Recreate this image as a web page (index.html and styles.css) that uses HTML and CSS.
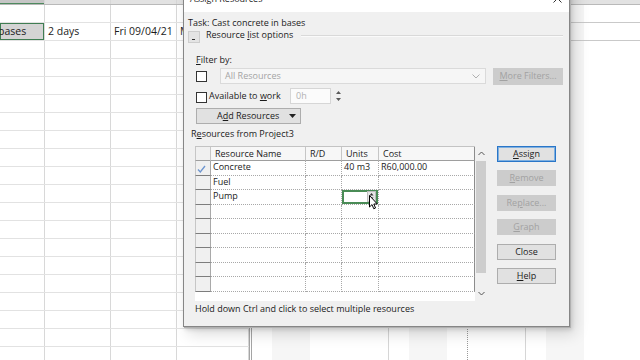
FILE: index.html
```html
<!DOCTYPE html>
<html lang="en">
<head>
  <meta charset="UTF-8">
  <title>Assign Resources</title>
  <link rel="stylesheet" href="styles.css">
</head>
<body>
<div class="screen">

  <!-- project sheet behind the dialog -->
  <div class="sheet">
    <div class="table">
      <div class="trow thead"><div class="tcell w1"></div><div class="tcell w2"></div><div class="tcell w3"></div><div class="tcell w4"></div></div>
      <div class="trow"><div class="tcell w1"></div><div class="tcell w2"></div><div class="tcell w3"></div><div class="tcell w4"></div></div>
      <div class="trow"><div class="tcell w1 picked"><span class="cut">bases</span></div><div class="tcell w2">2 days</div><div class="tcell w3">Fri 09/04/21</div><div class="tcell w4">Mon 12/04/21</div></div>
      <div class="trow"><div class="tcell w1"></div><div class="tcell w2"></div><div class="tcell w3"></div><div class="tcell w4"></div></div>
      <div class="trow"><div class="tcell w1"></div><div class="tcell w2"></div><div class="tcell w3"></div><div class="tcell w4"></div></div>
      <div class="trow"><div class="tcell w1"></div><div class="tcell w2"></div><div class="tcell w3"></div><div class="tcell w4"></div></div>
      <div class="trow"><div class="tcell w1"></div><div class="tcell w2"></div><div class="tcell w3"></div><div class="tcell w4"></div></div>
      <div class="trow"><div class="tcell w1"></div><div class="tcell w2"></div><div class="tcell w3"></div><div class="tcell w4"></div></div>
      <div class="trow"><div class="tcell w1"></div><div class="tcell w2"></div><div class="tcell w3"></div><div class="tcell w4"></div></div>
      <div class="trow"><div class="tcell w1"></div><div class="tcell w2"></div><div class="tcell w3"></div><div class="tcell w4"></div></div>
      <div class="trow"><div class="tcell w1"></div><div class="tcell w2"></div><div class="tcell w3"></div><div class="tcell w4"></div></div>
      <div class="trow"><div class="tcell w1"></div><div class="tcell w2"></div><div class="tcell w3"></div><div class="tcell w4"></div></div>
      <div class="trow"><div class="tcell w1"></div><div class="tcell w2"></div><div class="tcell w3"></div><div class="tcell w4"></div></div>
      <div class="trow"><div class="tcell w1"></div><div class="tcell w2"></div><div class="tcell w3"></div><div class="tcell w4"></div></div>
      <div class="trow"><div class="tcell w1"></div><div class="tcell w2"></div><div class="tcell w3"></div><div class="tcell w4"></div></div>
      <div class="trow"><div class="tcell w1"></div><div class="tcell w2"></div><div class="tcell w3"></div><div class="tcell w4"></div></div>
      <div class="trow"><div class="tcell w1"></div><div class="tcell w2"></div><div class="tcell w3"></div><div class="tcell w4"></div></div>
      <div class="trow"><div class="tcell w1"></div><div class="tcell w2"></div><div class="tcell w3"></div><div class="tcell w4"></div></div>
      <div class="trow"><div class="tcell w1"></div><div class="tcell w2"></div><div class="tcell w3"></div><div class="tcell w4"></div></div>
      <div class="trow"><div class="tcell w1"></div><div class="tcell w2"></div><div class="tcell w3"></div><div class="tcell w4"></div></div>
      <div class="trow"><div class="tcell w1"></div><div class="tcell w2"></div><div class="tcell w3"></div><div class="tcell w4"></div></div>
    </div>
    <div class="split"></div>
    <div class="gantt">
      <div class="ghead"></div>
      <div class="gline"></div>
      <div class="gline"></div>
      <div class="gbody"><div class="today"></div></div>
    </div>
  </div>

  <!-- dialog -->
  <div class="dialog">
    <div class="titlebar">
      <span class="title">Assign Resources</span>
      <svg class="close" width="9" height="9" viewBox="0 0 9 9"><path d="M0.5 0.5 L8.5 8.5 M8.5 0.5 L0.5 8.5" stroke="#333" stroke-width="1" fill="none"/></svg>
    </div>

    <div class="dlg-body">
      <div class="task">Task: Cast concrete in bases</div>

      <div class="opts">
        <span class="toggle"><span class="dash"></span></span>
        <span class="opts-label">Resource <u>l</u>ist options</span>
        <span class="rule"></span>
      </div>

      <div class="filters">
        <div class="flabel"><u>F</u>ilter by:</div>
        <div class="frow frow1">
          <span class="check"></span>
          <div class="combo">
            <span>All Resources</span>
            <svg width="8" height="5" viewBox="0 0 8 5"><polyline points="0.5,0.5 4,4 7.5,0.5" fill="none" stroke="#b0b0b0" stroke-width="1"/></svg>
          </div>
          <div class="btn off more"><u>M</u>ore Filters...</div>
        </div>
        <div class="frow frow2">
          <span class="check"></span>
          <span class="avail">Available to <u>w</u>ork</span>
          <div class="spin">0h</div>
          <svg class="spinner" width="9" height="16" viewBox="0 0 9 16"><path d="M2 6 L4.5 3 L7 6 Z M2 10 L4.5 13 L7 10 Z" fill="#5a5a5a"/></svg>
        </div>
        <div class="btn add">
          <span>A<u>d</u>d Resources</span>
          <svg class="drop" width="7" height="4" viewBox="0 0 7 4"><path d="M0 0 L7 0 L3.5 4 Z" fill="#222"/></svg>
        </div>
      </div>

      <div class="plabel">R<u>e</u>sources from Project3</div>

      <div class="main">
        <div class="grid">
          <div class="gtable">
            <div class="grow hrow">
              <div class="gc c0"></div><div class="gc c1">Resource Name</div><div class="gc c2">R/D</div><div class="gc c3">Units</div><div class="gc c4">Cost</div>
            </div>
            <div class="grow">
              <div class="gc c0"><svg width="9" height="8" viewBox="0 0 9 8"><polyline points="1,4.5 3.3,7 8,1" fill="none" stroke="#6d95cf" stroke-width="1.3"/></svg></div>
              <div class="gc c1">Concrete</div><div class="gc c2"></div><div class="gc c3">40 m3</div><div class="gc c4">R60,000.00</div>
            </div>
            <div class="grow">
              <div class="gc c0"></div><div class="gc c1">Fuel</div><div class="gc c2"></div><div class="gc c3"></div><div class="gc c4"></div>
            </div>
            <div class="grow">
              <div class="gc c0"></div><div class="gc c1">Pump</div><div class="gc c2"></div>
              <div class="gc c3 current">
                <svg class="cell-spin" width="9" height="11" viewBox="0 0 9 11"><rect x="0.5" y="0.5" width="8" height="10" fill="#e6e6e6" stroke="#bdbdbd"/><path d="M2.5 4.5 L4.5 2 L6.5 4.5 Z M2.5 6.5 L4.5 9 L6.5 6.5 Z" fill="#333"/></svg>
              </div>
              <div class="gc c4"></div>
            </div>
            <div class="grow"><div class="gc c0"></div><div class="gc c1"></div><div class="gc c2"></div><div class="gc c3"></div><div class="gc c4"></div></div>
            <div class="grow"><div class="gc c0"></div><div class="gc c1"></div><div class="gc c2"></div><div class="gc c3"></div><div class="gc c4"></div></div>
            <div class="grow"><div class="gc c0"></div><div class="gc c1"></div><div class="gc c2"></div><div class="gc c3"></div><div class="gc c4"></div></div>
            <div class="grow"><div class="gc c0"></div><div class="gc c1"></div><div class="gc c2"></div><div class="gc c3"></div><div class="gc c4"></div></div>
            <div class="grow"><div class="gc c0"></div><div class="gc c1"></div><div class="gc c2"></div><div class="gc c3"></div><div class="gc c4"></div></div>
            <div class="grow"><div class="gc c0"></div><div class="gc c1"></div><div class="gc c2"></div><div class="gc c3"></div><div class="gc c4"></div></div>
          </div>
          <div class="scroll">
            <div class="arrow"><svg width="7" height="5" viewBox="0 0 7 5"><polyline points="0.5,4 3.5,1 6.5,4" fill="none" stroke="#555" stroke-width="1"/></svg></div>
            <div class="thumb"></div>
            <div class="track"></div>
            <div class="arrow"><svg width="7" height="5" viewBox="0 0 7 5"><polyline points="0.5,1 3.5,4 6.5,1" fill="none" stroke="#555" stroke-width="1"/></svg></div>
          </div>
        </div>

        <div class="actions">
          <div class="btn def"><u>A</u>ssign</div>
          <div class="btn off"><u>R</u>emove</div>
          <div class="btn off">Re<u>p</u>lace...</div>
          <div class="btn off"><u>G</u>raph</div>
          <div class="btn">Close</div>
          <div class="btn"><u>H</u>elp</div>
        </div>
      </div>

      <div class="footer">Hold down Ctrl and click to select multiple resources</div>
    </div>
  </div>

  <!-- mouse pointer -->
  <svg class="pointer" width="10" height="15" viewBox="0 0 10 15"><path d="M0.5 0.5 L0.5 12 L3 9.6 L4.8 13.8 L6.5 13 L4.8 9 L8.3 9 Z" fill="#fff" stroke="#000" stroke-width="1" stroke-linejoin="round"/></svg>

</div>
</body>
</html>
```

FILE: styles.css
```css
* {
  box-sizing: border-box;
}

body {
  margin: 0;
  background: #fff;
  font-family: "Open Sans", "Noto Sans", sans-serif;
  color: #1b1b1b;
}

.screen {
  position: relative;
  width: 640px;
  height: 360px;
  overflow: hidden;
}

/* background project sheet */
.sheet {
  display: flex;
  margin-top: -13px;
  height: 373px;
}

.table {
  width: 249px;
  flex: none;
}

.trow {
  display: flex;
  height: 18px;
  border-bottom: 1px solid #e2e2e2;
}

.tcell {
  height: 17px;
  border-right: 1px solid #d8d8d8;
  font-size: 10.5px;
  line-height: 17px;
  padding-left: 3px;
  white-space: nowrap;
  overflow: hidden;
}

.w1 { width: 45px; }
.w2 { width: 66px; }
.w3 { width: 66px; }
.w4 { width: 72px; }

.thead {
  background: #e2e2e2;
  border-bottom: 1px solid #b9b9b9;
}

.thead .w1 {
  background: #c6c6c6;
  box-shadow: inset 0 -1px 0 #4e8a5e;
}

.picked {
  background: #d4d4d4;
  box-shadow: inset 0 0 0 1px #3f7d52;
  padding-left: 0;
}

.cut {
  margin-left: -2px;
}

.split {
  width: 3px;
  flex: none;
  border-left: 1px solid #a5a5a5;
  border-right: 1px solid #a5a5a5;
}

.gantt {
  flex: 1;
  display: flex;
  flex-direction: column;
  background: repeating-linear-gradient(90deg, #fff 0 20px, #f6f6f6 20px 58px, #fff 58px 136px, #d6d6d6 136px 137px);
}

.ghead {
  height: 18px;
  background: #e2e2e2;
  border-bottom: 1px solid #b9b9b9;
}

.gline {
  height: 18px;
  border-bottom: 1px solid #c9c9c9;
}

.gbody {
  flex: 1;
}

.today {
  margin-left: 215px;
  height: 100%;
  border-left: 1px dotted #9a9a9a;
}

/* dialog */
.dialog {
  position: absolute;
  left: 183px;
  top: -22px;
  width: 387px;
  height: 349px;
  background: #f0f0f0;
  border: 1px solid #868686;
  box-shadow: 1px 1px 0 #b0b0b0, 2px 3px 4px rgba(0, 0, 0, 0.12), 5px 7px 14px rgba(0, 0, 0, 0.14);
  display: flex;
  flex-direction: column;
  font-size: 9px;
}

.titlebar {
  height: 33px;
  flex: none;
  background: #fff;
  display: flex;
  justify-content: space-between;
  align-items: flex-start;
  padding: 14px 7px 0 6px;
}

.title {
  font-size: 9px;
  line-height: 12px;
}

.close {
  margin-top: 1px;
}

.dlg-body {
  padding: 5px 6px 0 4px;
  display: flex;
  flex-direction: column;
}

.task {
  line-height: 12px;
}

.opts {
  display: flex;
  height: 14px;
}

.toggle {
  width: 12px;
  height: 12px;
  margin-top: 2px;
  background: #e4e4e4;
  border: 1px solid #cdcdcd;
}

.dash {
  display: block;
  width: 3px;
  height: 1px;
  background: #333;
  margin: 7px 0 0 3px;
}

.opts-label {
  margin-left: 6px;
  line-height: 12px;
}

.rule {
  flex: 1;
  height: 2px;
  margin: 6px 0 0 8px;
  border-top: 1px solid #d9d9d9;
  border-bottom: 1px solid #fafafa;
}

.filters {
  margin: 11px 0 0 8px;
  display: flex;
  flex-direction: column;
  align-items: flex-start;
}

.flabel {
  line-height: 12px;
}

.frow {
  display: flex;
  align-items: flex-start;
}

.frow1 {
  height: 17px;
  margin-top: 2px;
}

.frow2 {
  height: 16px;
  margin-top: 3px;
}

.check {
  width: 11px;
  height: 11px;
  background: #fff;
  border: 1px solid #333;
}

.frow1 .check {
  margin-top: 3px;
}

.frow2 .check {
  margin-top: 4px;
}

.combo {
  width: 266px;
  height: 16px;
  margin-left: 13px;
  padding: 0 5px 0 4px;
  background: #f6f6f6;
  border: 1px solid #dadada;
  color: #a4a4a4;
  line-height: 14px;
  display: flex;
  justify-content: space-between;
  align-items: center;
}

.btn {
  height: 16px;
  background: #e1e1e1;
  border: 1px solid #adadad;
  text-align: center;
  line-height: 14px;
  white-space: nowrap;
}

.btn.off {
  background: #cccccc;
  border-color: #cccccc;
  color: #a2a2a2;
}

.btn.def {
  border-color: #2a76c8;
  box-shadow: inset 0 0 0 1px #7fb0e0;
}

.more {
  width: 70px;
  height: 17px;
  margin-left: 7px;
}

.avail {
  width: 81px;
  margin-left: 2px;
  line-height: 16px;
}

.spin {
  width: 41px;
  height: 16px;
  padding-left: 5px;
  background: #fbfbfb;
  border: 1px solid #d6d6d6;
  color: #b2b2b2;
  line-height: 14px;
}

.spinner {
  margin-left: 3px;
}

.add {
  width: 105px;
  margin-top: 4px;
  display: flex;
  align-items: center;
  padding: 0 4px 0 20px;
}

.drop {
  margin-left: auto;
}

.plabel {
  margin: 4px 0 0 3px;
  line-height: 12px;
}

.main {
  display: flex;
  margin: 6px 0 0 7px;
}

.grid {
  width: 292px;
  height: 155px;
  display: flex;
  background: #fff;
  overflow: hidden;
}

.gtable {
  width: 280px;
  border-top: 1px solid #c3c3c3;
}

.grow {
  display: flex;
  height: 14.5px;
}

.gc {
  height: 100%;
  border-right: 1px dotted #a8a8a8;
  border-bottom: 1px dotted #a8a8a8;
  padding-left: 2px;
  line-height: 12.5px;
  white-space: nowrap;
  overflow: hidden;
}

.c0 {
  width: 16px;
  background: #f0f0f0;
  border-left: 1px solid #c6c6c6;
  border-right: 1px solid #a9a9a9;
  border-bottom: 1px solid #7d7d7d;
  padding: 3px 0 0 1px;
}

.c1 { width: 95px; }
.c2 { width: 36px; padding-left: 3px; }
.c3 { width: 37px; }
.c4 { width: 96px; border-right: 1px solid #8c8c8c; }

.hrow {
  height: 14px;
}

.hrow .gc {
  background: #f7f7f7;
  border-right: 1px solid #c6c6c6;
  border-bottom: 1px solid #9e9e9e;
  line-height: 13px;
  padding-left: 4px;
}

.hrow .c0 {
  background: #f0f0f0;
  border-bottom: 1px solid #9e9e9e;
}

.hrow .c4 {
  border-right: 1px solid #8c8c8c;
}

.current {
  position: relative;
  box-shadow: inset 0 0 0 2px #4a8c56;
}

.cell-spin {
  position: absolute;
  right: 2px;
  top: 1px;
}

.scroll {
  width: 12px;
  background: #f0f0f0;
  display: flex;
  flex-direction: column;
  align-items: center;
}

.arrow {
  height: 15px;
  display: flex;
  align-items: center;
  justify-content: center;
}

.thumb {
  width: 10px;
  height: 112px;
  background: #cdcdcd;
}

.track {
  flex: 1;
}

.actions {
  width: 59px;
  margin-left: 10px;
  display: flex;
  flex-direction: column;
  gap: 8.4px;
}

.footer {
  margin: 2px 0 0 7px;
  line-height: 12px;
}

.pointer {
  position: absolute;
  left: 369px;
  top: 195px;
}
```
